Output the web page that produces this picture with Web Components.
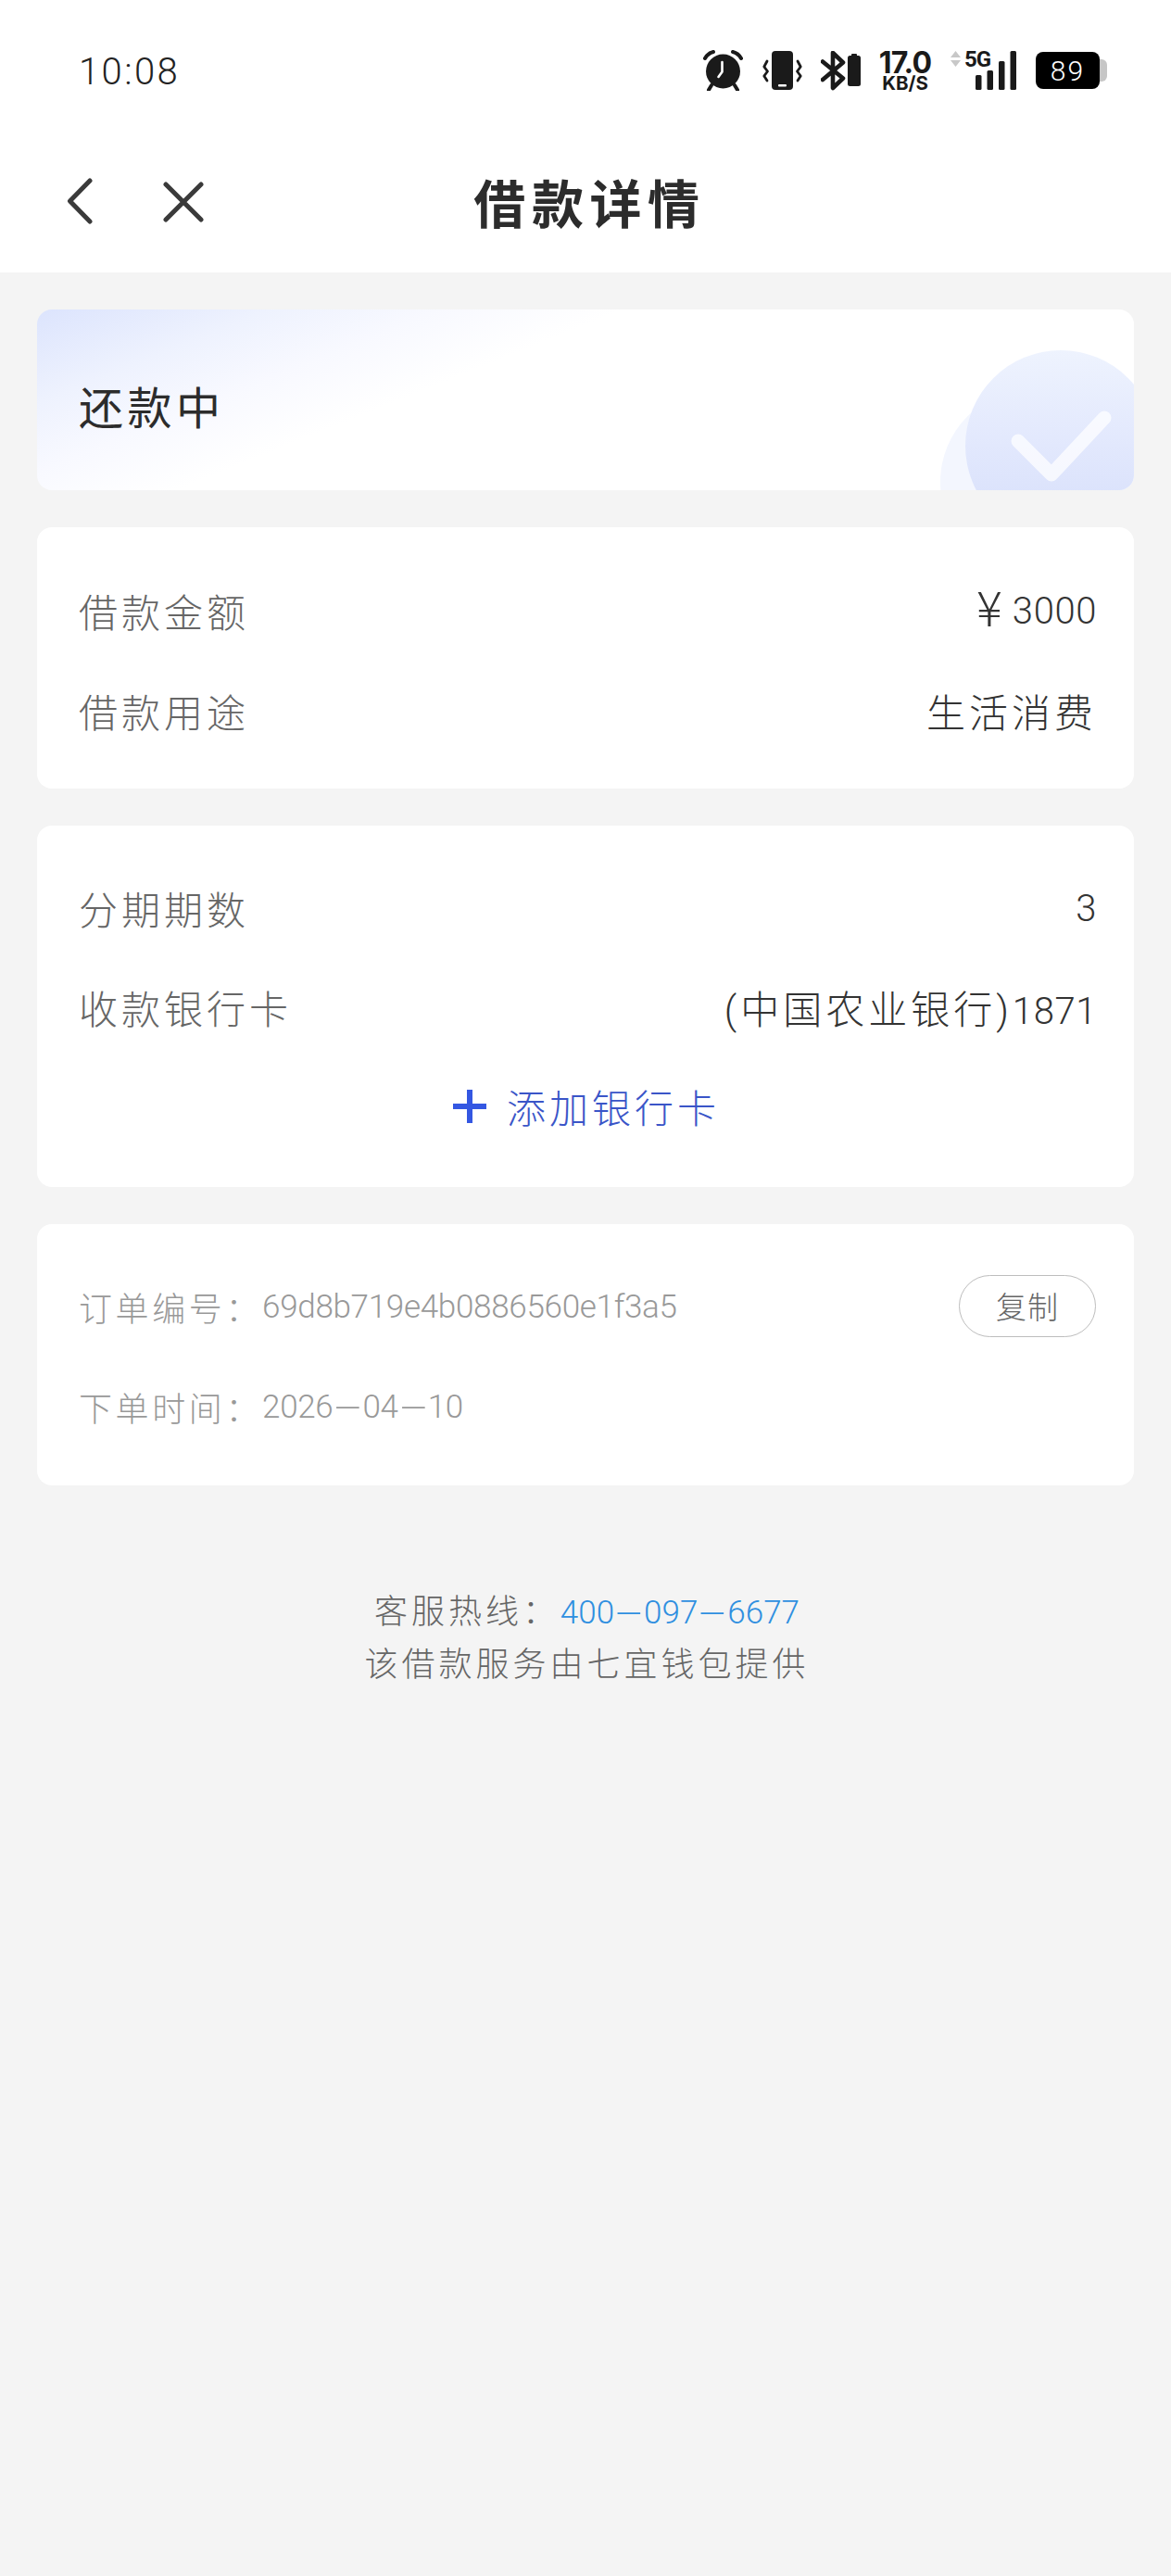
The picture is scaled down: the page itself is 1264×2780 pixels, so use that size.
<!DOCTYPE html>
<html lang="zh-CN"><head><meta charset="utf-8"><title>借款详情</title>
<style>
html,body{margin:0;padding:0;background:#f4f4f4;}
body{font-family:Roboto,"Noto Sans CJK SC",sans-serif;font-weight:300;min-height:2780px;}
</style></head>
<body>
<loan-page>
  <status-bar></status-bar>
  <nav-bar>借款详情</nav-bar>
  <main-stack>
    <status-card>还款中</status-card>
    <detail-card>
      <detail-row><span slot="label">借款金额</span><money-value>¥</money-value><num-run>3000</num-run></detail-row>
      <detail-row><span slot="label">借款用途</span>生活消费</detail-row>
    </detail-card>
    <detail-card style="--row:107px;--pb:34px">
      <detail-row><span slot="label">分期期数</span><num-run>3</num-run></detail-row>
      <detail-row><span slot="label">收款银行卡</span>(中国农业银行)<num-run>1871</num-run></detail-row>
      <add-card>添加银行卡</add-card>
    </detail-card>
    <detail-card>
      <order-row>订单编号：<span slot="value">69d8b719e4b0886560e1f3a5</span><copy-button slot="action">复制</copy-button></order-row>
      <order-row>下单时间：<span slot="value">2026<wide-dash>-</wide-dash>04<wide-dash>-</wide-dash>10</span></order-row>
    </detail-card>
    <page-footer>
      <span>客服热线：</span><span slot="phone">400<wide-dash>-</wide-dash>097<wide-dash>-</wide-dash>6677</span>
      <span slot="line2">该借款服务由七宜钱包提供</span>
    </page-footer>
  </main-stack>
</loan-page>
<script>
function def(name,html){
  customElements.define(name,class extends HTMLElement{
    constructor(){super();this.attachShadow({mode:'open'}).innerHTML=html;}
  });
}
def('loan-page',`<style>:host{display:block}</style><slot></slot>`);
def('main-stack',`<style>:host{display:flex;flex-direction:column;gap:40px;padding:40px 40px 0}</style><slot></slot>`);
def('status-bar',`<style>
:host{display:flex;align-items:center;justify-content:space-between;height:140px;padding:12px 69px 0 85px;box-sizing:border-box;background:#fff;color:#1a1a1a}
.time{font:300 40px Roboto,sans-serif;letter-spacing:2.4px;color:#222;margin-top:3px}
.icons{display:flex;align-items:center;height:44px}
svg{display:block;flex:none}
.speed{width:58px;margin:0 20px 0 19px;display:flex;flex-direction:column;align-items:center;font-family:Inter,Roboto,sans-serif;font-weight:700;color:#1a1a1a}
.speed b{font-size:32px;line-height:25px;letter-spacing:-.8px;font-weight:700}
.speed i{font-style:normal;font-size:20.5px;line-height:17px;letter-spacing:0;margin-top:1px}
.net{position:relative;width:71px;height:42px;margin-right:21px}
.net span{position:absolute;left:15px;top:-1px;font:700 24px/21px Roboto,sans-serif;letter-spacing:-1px;color:#1a1a1a}
.batt{position:relative;width:77px;height:40px;flex:none}
.batt .nub{position:absolute;left:67px;top:8px;width:10px;height:24px;background:#c6c6c6;border-radius:0 6px 6px 0}
.batt .body{position:relative;width:69px;height:40px;background:#000;border-radius:8px;display:flex;align-items:center;justify-content:center;color:#fff;font:300 30px Roboto,sans-serif;letter-spacing:2px}
</style>
<span class="time">10:08</span>
<div class="icons">
<svg width="43" height="44" viewBox="0 0 43 44" style="margin-right:21px"><circle cx="21.5" cy="23" r="18.5" fill="#1a1a1a"/><path d="M2 9Q5 3.5 11 2M41 9Q38 3.5 32 2" fill="none" stroke="#1a1a1a" stroke-width="4" stroke-linecap="round"/><path d="M9 38L6 43M34 38L37 43" stroke="#1a1a1a" stroke-width="4" stroke-linecap="round"/><path d="M20.5 13V23.5L16.5 29" fill="none" stroke="#fff" stroke-width="2.6" stroke-linecap="round" stroke-linejoin="round"/></svg>
<svg width="43" height="43" viewBox="0 0 43 43" style="margin-right:20px"><rect x="10" y="0" width="23" height="42" rx="4" fill="#1a1a1a"/><rect x="17" y="36" width="9" height="2.4" rx="1" fill="#fff"/><path d="M5 11L1.8 17L5.5 22L1.8 27L5 32M38 11L41.2 17L37.5 22L41.2 27L38 32" fill="none" stroke="#1a1a1a" stroke-width="2.8" stroke-linecap="round" stroke-linejoin="round"/></svg>
<svg width="43" height="43" viewBox="0 0 43 43"><path d="M2 11.5L24 29.5L13 40V2L24 12.5L2 31" fill="none" stroke="#1a1a1a" stroke-width="4.6" stroke-linecap="round" stroke-linejoin="round"/><rect x="29" y="5" width="14" height="33" rx="2.5" fill="#1a1a1a"/><rect x="33" y="3" width="6" height="3" rx="1" fill="#1a1a1a"/></svg>
<div class="speed"><b>17.0</b><i>KB/S</i></div>
<div class="net"><svg width="71" height="42" viewBox="0 0 71 42"><path d="M5.5 0L11 7H0ZM5.5 17L11 10H0Z" fill="#c8c8c8"/><rect x="27" y="26" width="6.5" height="16" rx="1.5" fill="#1a1a1a"/><rect x="39.5" y="21" width="6.5" height="21" rx="1.5" fill="#1a1a1a"/><rect x="52" y="11" width="6.5" height="31" rx="1.5" fill="#1a1a1a"/><rect x="64.5" y="0" width="6.5" height="42" rx="1.5" fill="#1a1a1a"/></svg><span>5G</span></div>
<div class="batt"><div class="nub"></div><div class="body">89</div></div>
</div>`);
def('nav-bar',`<style>
:host{display:grid;grid-template-columns:1fr auto 1fr;align-items:center;height:154px;box-sizing:border-box;background:#fff}
.l{display:flex;align-items:center;padding-left:72px;gap:75px}
svg{display:block}
.x{margin-top:2px}
.t{font:700 56px "Noto Sans CJK SC",sans-serif;letter-spacing:6.6px;color:#2c2c2c;padding-left:9px;line-height:64px}
</style>
<div class="l"><svg width="29" height="50" viewBox="0 0 29 50"><path d="M25 3L3.5 25L25 47" fill="none" stroke="#3a3a3a" stroke-width="5" stroke-linecap="round" stroke-linejoin="round"/></svg>
<svg class="x" width="44" height="44" viewBox="0 0 44 44"><path d="M3 3L41 41M41 3L3 41" fill="none" stroke="#3a3a3a" stroke-width="5" stroke-linecap="round"/></svg></div>
<div class="t"><slot></slot></div><div></div>`);
def('status-card',`<style>
:host{display:flex;align-items:center;position:relative;overflow:hidden;height:195px;box-sizing:border-box;padding:11px 0 0 45px;border-radius:16px;background:linear-gradient(158deg,#dce4fd 0%,#eef2fe 15%,#f8f9ff 26%,#fff 38%);font:400 48px "Noto Sans CJK SC",sans-serif;letter-spacing:4.5px;color:#2c2c2c}
.c2{position:absolute;left:975px;top:86px;width:200px;height:200px;border-radius:50%;background:#f3f6fe}
.c1{position:absolute;left:1002px;top:44px;width:206px;height:206px;border-radius:50%;background:linear-gradient(180deg,#eef3fe 0%,#e2e8fd 50%,#d9e1fb 85%)}
svg{position:absolute;left:1042px;top:101px}
.t{position:relative}
</style>
<div class="c2"></div><div class="c1"></div>
<svg width="120" height="100" viewBox="0 0 120 100"><path d="M17 41L53 77L110 16" fill="none" stroke="#fff" stroke-opacity=".72" stroke-width="15" stroke-linecap="round" stroke-linejoin="round"/></svg>
<span class="t"><slot></slot></span>`);
def('detail-card',`<style>:host{display:block;background:#fff;border-radius:16px;padding:35px 43px var(--pb,31px) 45px}</style><slot></slot>`);
def('detail-row',`<style>
:host{display:flex;align-items:center;justify-content:space-between;height:var(--row,108px);font:300 42px Roboto,"Noto Sans CJK SC",sans-serif;color:#333;letter-spacing:4px}
.l{color:#666}
.v{white-space:nowrap;margin-right:-3px}
</style><span class="l"><slot name="label"></slot></span><span class="v"><slot></slot></span>`);
def('num-run',`<style>:host{display:inline;font-size:40px;letter-spacing:.6px}</style><slot></slot>`);
def('money-value',`<style>:host{display:inline;font:300 52px/0 "Noto Sans CJK SC",sans-serif;letter-spacing:11px;position:relative;top:3px}</style><slot></slot>`);
def('add-card',`<style>
:host{display:flex;align-items:center;justify-content:center;height:var(--row,108px);gap:22px;font:300 42px "Noto Sans CJK SC",sans-serif;letter-spacing:4px;color:#3a55c8}
svg{display:block}
</style><svg width="36" height="36" viewBox="0 0 36 36"><path d="M18 0V36M0 18H36" stroke="#3457e2" stroke-width="6"/></svg><span><slot></slot></span>`);
def('order-row',`<style>
:host{display:flex;align-items:center;height:108px;font:300 36px Roboto,"Noto Sans CJK SC",sans-serif;letter-spacing:3.6px;color:#999}
.v{font-size:35px;letter-spacing:-.3px;flex:1;white-space:nowrap}
</style><span><slot></slot></span><span class="v"><slot name="value"></slot></span><slot name="action"></slot>`);
def('copy-button',`<style>
:host{display:flex;align-items:center;justify-content:center;box-sizing:border-box;width:148px;height:67px;margin:-2px -2px 0 0;border:1px solid #bdbdbd;border-radius:34px;font:300 33px "Noto Sans CJK SC",sans-serif;letter-spacing:1px;color:#666}
</style><slot></slot>`);
def('wide-dash',`<style>
:host{display:inline-block;width:32px;text-align:center;transform:scaleX(3);font-weight:300}
</style><slot></slot>`);
def('page-footer',`<style>
:host{display:flex;flex-direction:column;align-items:center;padding-top:69px;padding-left:3px;font:300 36px/57px Roboto,"Noto Sans CJK SC",sans-serif;color:#666;letter-spacing:4px}
.p{color:#2f8fe0;letter-spacing:0;font-size:35px;margin-left:-12px}
</style><div><slot></slot><span class="p"><slot name="phone"></slot></span></div><div><slot name="line2"></slot></div>`);
</script>
</body></html>
